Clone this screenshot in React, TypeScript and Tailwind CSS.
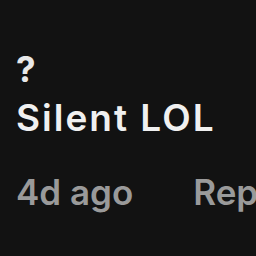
export default function App() {
  return (
    <div className="w-[256px] h-[256px] bg-[#121212] overflow-hidden" style={{ fontFamily: 'Inter, "Noto Sans", sans-serif' }}>
      <div className="pl-[16px] pt-[51px] flex flex-col">
        <div className="text-[35px] font-bold leading-[36px] text-[#e8e8e8]">?</div>
        <div className="text-[37px] font-semibold leading-[36px] tracking-[2px] text-[#f0f0f0] whitespace-nowrap mt-[13px]">Silent LOL</div>
        <div className="flex gap-[60px] text-[35px] leading-[35px] text-[#9a9a9a] font-semibold whitespace-nowrap mt-[39px]">
          <span>4d ago</span>
          <span>Reply</span>
        </div>
      </div>
    </div>
  );
}
